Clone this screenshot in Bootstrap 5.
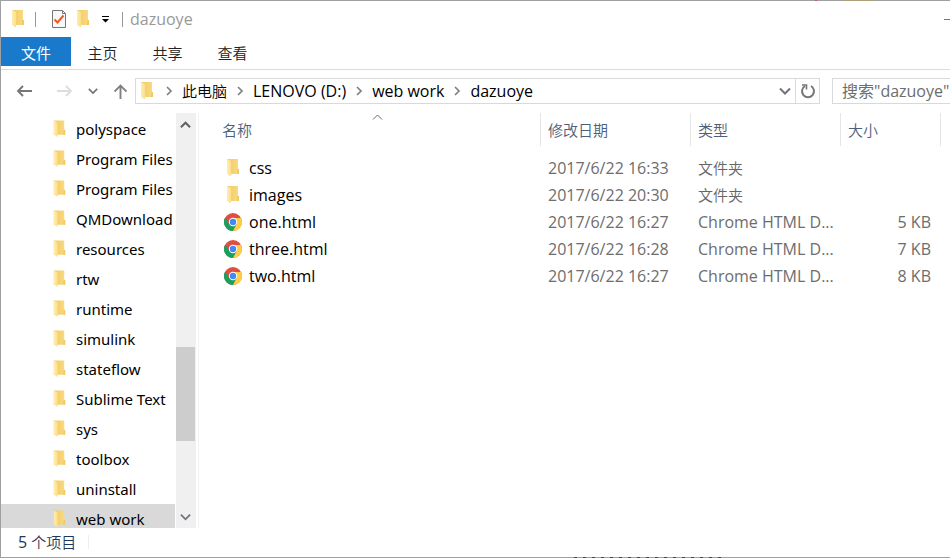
<!DOCTYPE html>
<html lang="zh-CN">
<head>
<meta charset="utf-8">
<meta name="viewport" content="width=device-width, initial-scale=1">
<title>dazuoye</title>
<link href="https://cdn.jsdelivr.net/npm/bootstrap@5.3.0/dist/css/bootstrap.min.css" rel="stylesheet">
<style>
body{font-family:"Open Sans","Noto Sans CJK SC",sans-serif;font-size:16px;line-height:20px;color:#000;background:#fff}
button,input{font:inherit}
a{color:inherit;text-decoration:none}
.han{font-size:15px;font-weight:350}
.explorer{height:100vh;border:1px solid #a0a0a0;border-right:0;background:#fff}
.backdrop-top{top:0;right:76px;width:30px;height:1px;background:#b0a07a}
.backdrop-pink{top:0;right:133px;width:2px;height:1px;background:#c4508a}
.backdrop-bottom{bottom:0;left:574px;width:150px;height:1px;background:repeating-linear-gradient(90deg,#444 0 3px,#a0a0a0 3px 9px)}
.minimize{width:6px;height:1px;background:#777}
.plain{border:0;background:none;padding:0;display:flex;align-items:center;justify-content:center;flex:none}
.titlebar{height:37px;padding-left:8px}
.vline{width:1px;height:15px;background:#999}
.caption{color:#999;margin-left:7px}
.ribbon{height:32px;border-bottom:1px solid #dadbdc;margin-bottom:1px}
.ribbon{height:33px;margin-bottom:0}
.ribbon button{height:29px;width:65px;color:#222;font-size:15px;padding:2px 2px 0 0}
.ribbon .file{width:70px;padding-right:0;background:#1979ca;color:#fff}
.addressbar{padding:8px 0 9px 14px}
.pathbox{height:26px;border:1px solid #d9d9d9;padding-left:2px}
.pathbox .crumbsep{width:26px;display:flex;justify-content:center}
.reload{width:24px;height:24px;border-left:1px solid #d9d9d9}
.searchbox{width:118px;height:26px;border:1px solid #d9d9d9;border-right:0;border-radius:0;padding:0 0 0 9px;margin-left:12px;outline:0;flex:none}
.searchbox::placeholder{color:#6d6d6d;opacity:1}
.tree{width:175px;padding-top:1px;font-family:"Noto Sans","Noto Sans CJK SC",sans-serif;font-size:15px}
.tree a{height:30px;padding-left:50px;gap:8px;white-space:nowrap;width:174px;overflow:hidden;flex:none}
.tree a.current{background:#d9d9d9}
.scroller{width:20px;background:#f0f0f0}
.scroller button{height:23px;width:19px}
.track-above{flex:210}
.thumb{flex:94;width:19px;background:#cdcdcd}
.track-below{flex:64}
.splitter{width:3px;border-right:1px solid #f3f3f3}
.files{table-layout:fixed;width:100%;border-collapse:separate;border-spacing:0}
.files th{height:33px;font-size:15px;font-weight:350;color:#4c607a;border-right:1px solid #e5e5e5;padding:0 0 0 7px;position:relative}
.files th:first-child{padding-left:23px}
.files th:last-child{border:0}
.files td{height:27px;padding:0 0 0 7px;color:#6d6d6d;white-space:nowrap;overflow:hidden}
.files td:first-child{padding-left:25px}
.files td.size{text-align:right;padding-right:10px}
.files tbody::before{content:"";display:block;height:8px}
.files a{color:#000;gap:7px}
.files .han{color:#666}
.sortmark{top:1px;left:173px}
.fileicon{width:18px;display:flex;justify-content:center;flex:none}
.status{height:29px;color:#1e395b;padding:0 0 2px 17px}
.status .edge{width:1px;height:14px;background:#eee;margin-left:12px}
</style>
<script src="https://cdn.jsdelivr.net/npm/bootstrap@5.3.0/dist/js/bootstrap.bundle.min.js"></script>
</head>
<body>
<svg width="0" height="0" class="position-absolute" aria-hidden="true">
<defs>
<linearGradient id="foldback"><stop stop-color="#efca68"/><stop offset="1" stop-color="#fadb80"/></linearGradient>
<linearGradient id="foldfront"><stop stop-color="#ffedb0"/><stop offset="1" stop-color="#fddf88"/></linearGradient>
<symbol id="folder" viewBox="0 0 18 18"><path d="M3 0h11v10h1v5H3z" fill="url(#foldback)"/><path d="M14 10h1v5h-2v-4z" fill="#efc964"/><path d="M3 0l4 2v15l-1 0-3-2z" fill="url(#foldfront)"/></symbol>
<symbol id="chrome" viewBox="0 0 18 18"><circle cx="9" cy="9" r="9" fill="#dd4f43"/><path d="M1.200 4.500A9 9 0 0 0 9 18l3.700-7L9 13 5.200 11z" fill="#18a05e"/><path d="M9 5h8.060A9 9 0 0 1 9 18l3.600-7z" fill="#ffce43"/><circle cx="9" cy="9" r="4.200" fill="#fff"/><circle cx="9" cy="9" r="3.200" fill="#4587f3"/></symbol>
<symbol id="next" viewBox="0 0 8 10"><path d="M2 1l4 4-4 4" fill="none" stroke="#808080" stroke-width="1.700"/></symbol>
<symbol id="down" viewBox="0 0 12 8"><path d="M1 1.500l5 5 5-5" fill="none" stroke="currentColor" stroke-width="2"/></symbol>
</defs></svg>
<div class="explorer d-flex flex-column overflow-hidden position-relative">
  <header class="titlebar d-flex align-items-center">
    <svg width="18" height="18"><use href="#folder"/></svg>
    <span class="vline ms-2 me-3"></span>
    <button class="plain" aria-label="属性"><svg width="14" height="18" viewBox="0 0 14 18"><path d="M.5.500h10l3 3v14H.5z" fill="#f8f8f8" stroke="#777"/><path d="M10.500.500v3h3" fill="none" stroke="#777"/><path d="M2.500 9.500l3 3 6-7" fill="none" stroke="#f05a22" stroke-width="2"/></svg></button>
    <button class="plain ms-2 pe-2" aria-label="新建文件夹"><svg width="18" height="18"><use href="#folder"/></svg></button>
    <button class="plain" aria-label="自定义"><svg width="14" height="10" viewBox="2 0 14 10"><path d="M4 2h7v1H4zM4 5h7L7.500 8.500z"/></svg></button>
    <span class="vline ms-2"></span><span class="caption">dazuoye</span>
    <span class="minimize ms-auto"></span>
  </header>
  <nav class="ribbon d-flex" aria-label="功能区">
    <button class="plain file">文件</button><button class="plain han">主页</button><button class="plain han">共享</button><button class="plain han">查看</button>
  </nav>
  <div class="addressbar d-flex align-items-center">
    <button class="plain" aria-label="后退"><svg width="18" height="16" viewBox="0 0 18 16"><path d="M17 8H3M8 3L3 8l5 5" fill="none" stroke="#777" stroke-width="1.900"/></svg></button>
    <button class="plain ms-4" aria-label="前进"><svg width="15" height="16" viewBox="0 0 15 16"><path d="M0 8h14M9 3l5 5-5 5" fill="none" stroke="#ddd" stroke-width="1.900"/></svg></button>
    <button class="plain ms-3 text-secondary" aria-label="最近位置"><svg width="10" height="8"><use href="#down"/></svg></button>
    <button class="plain ps-3 pe-2" aria-label="上移"><svg width="13" height="17" viewBox="1 0 13 17"><path d="M7.500 16V2.500M1.500 8.500l6-6 6 6" fill="none" stroke="#808080" stroke-width="1.900"/></svg></button>
    <div class="pathbox d-flex align-items-center flex-grow-1">
      <svg width="18" height="18" class="flex-shrink-0"><use href="#folder"/></svg>
      <span class="crumbsep"><svg width="8" height="10"><use href="#next"/></svg></span><a href="#" class="han">此电脑</a>
      <span class="crumbsep"><svg width="8" height="10"><use href="#next"/></svg></span><a href="#">LENOVO (D:)</a>
      <span class="crumbsep"><svg width="8" height="10"><use href="#next"/></svg></span><a href="#">web work</a>
      <span class="crumbsep"><svg width="8" height="10"><use href="#next"/></svg></span><a href="#">dazuoye</a>
      <button class="plain ms-auto text-secondary" aria-label="历史记录"><svg width="12" height="8"><use href="#down"/></svg></button>
      <button class="plain reload ms-1" aria-label="刷新"><svg width="16" height="16" viewBox="0 0 16 16"><path d="M5 3A6 6 0 1 0 11 3" fill="none" stroke="#777" stroke-width="2"/><path d="M2 2h4.500v4.500" fill="none" stroke="#777" stroke-width="1.600"/></svg></button>
    </div>
    <input class="searchbox" type="text" aria-label="搜索" placeholder='搜索"dazuoye"'>
  </div>
  <main class="d-flex flex-grow-1 overflow-hidden">
    <nav class="tree d-flex flex-column overflow-hidden flex-shrink-0" aria-label="文件夹"></nav>
    <div class="scroller d-flex flex-column flex-shrink-0">
      <button class="plain" aria-label="向上滚动"><svg width="11" height="8" viewBox="0 0 12 8"><path d="M1 6.500l5-5 5 5" fill="none" stroke="#606060" stroke-width="2.200"/></svg></button>
      <div class="track-above"></div><div class="thumb"></div><div class="track-below"></div>
      <button class="plain text-secondary" aria-label="向下滚动"><svg width="11" height="8"><use href="#down"/></svg></button>
    </div>
    <div class="splitter flex-shrink-0"></div>
    <section class="flex-grow-1 overflow-hidden">
      <table class="files">
        <colgroup><col><col style="width:150px"><col style="width:150px"><col style="width:100px"><col style="width:9px"></colgroup>
        <thead><tr><th>名称<svg class="sortmark position-absolute" width="11" height="6" viewBox="0 0 11 6"><path d="M1 5.500l4.500-4.500L10 5.500" fill="none" stroke="#666"/></svg></th><th>修改日期</th><th>类型</th><th>大小</th><th></th></tr></thead>
        <tbody></tbody>
      </table>
    </section>
  </main>
  <footer class="status d-flex align-items-center flex-shrink-0"><span>5 <span class="han">个项目</span></span><span class="edge"></span></footer>
</div>
<div class="backdrop-top position-absolute"></div><div class="backdrop-pink position-absolute"></div><div class="backdrop-bottom position-absolute"></div>
<script>
const folders=["polyspace","Program Files","Program Files","QMDownload","resources","rtw","runtime","simulink","stateflow","Sublime Text","sys","toolbox","uninstall","web work"];
document.querySelector(".tree").innerHTML=folders.map((n,i)=>`<a href="#" class="d-flex align-items-center ${i===13?"current":""}"><svg width="17" height="18" class="flex-shrink-0"><use href="#folder"/></svg>${n}</a>`).join("");
const files=[["css","2017/6/22 16:33"],["images","2017/6/22 20:30"],["one.html","2017/6/22 16:27","5 KB"],["three.html","2017/6/22 16:28","7 KB"],["two.html","2017/6/22 16:27","8 KB"]];
document.querySelector(".files tbody").innerHTML=files.map(([n,d,s])=>`<tr><td><a href="#" class="d-flex align-items-center"><span class="fileicon"><svg width="18" height="18"><use href="#${s?"chrome":"folder"}"/></svg></span>${n}</a></td><td>${d}</td><td>${s?"Chrome HTML D...":'<span class="han">文件夹</span>'}</td><td class="size">${s||""}</td><td></td></tr>`).join("");
</script>
</body>
</html>
